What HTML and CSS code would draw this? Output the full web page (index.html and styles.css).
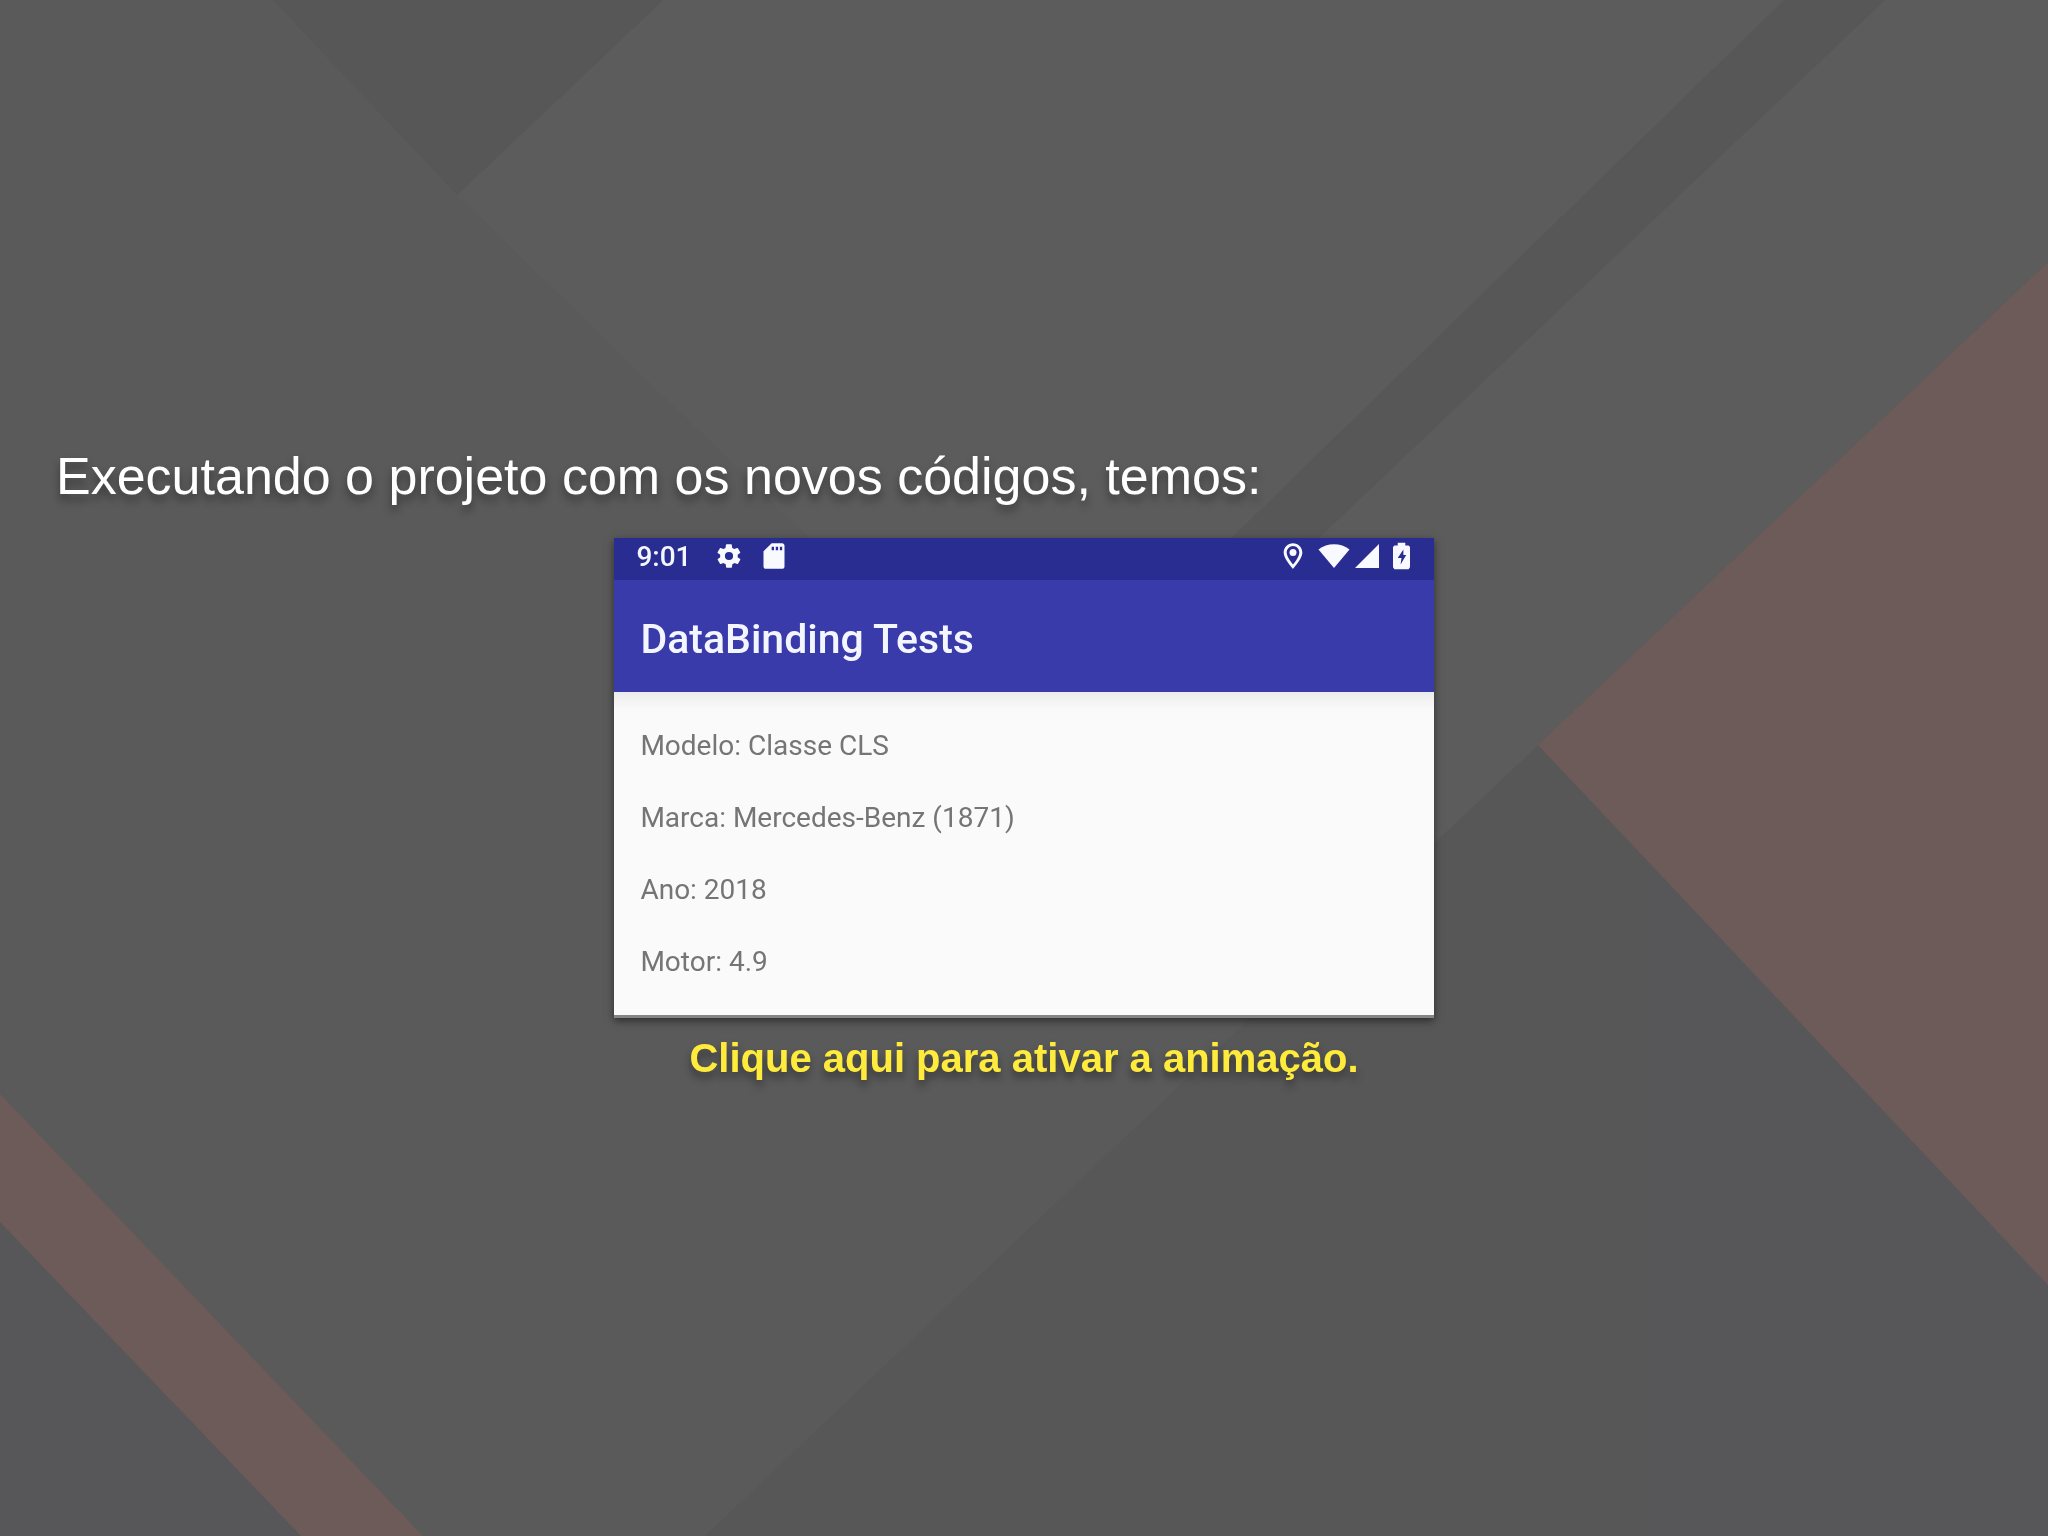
FILE: index.html
```html
<!DOCTYPE html>
<html lang="pt-BR">
<head>
    <meta charset="UTF-8">
    <meta name="viewport" content="width=device-width, initial-scale=1.0">
    <title>DataBinding Tests</title>
    <link rel="stylesheet" href="styles.css">
</head>
<body>
    <svg class="bg" viewBox="0 0 2048 1536" preserveAspectRatio="none" aria-hidden="true">
        <defs>
            <linearGradient id="shade">
                <stop offset="0" stop-color="#575757"/>
                <stop offset=".5" stop-color="#575757"/>
                <stop offset=".8" stop-color="#575759"/>
            </linearGradient>
        </defs>
        <polygon fill="#5c5c5c" points="457,195 663,0 2048,0 2048,262 1538,747 1340,930 1180,900"/>
        <polygon fill="#575757" points="273,0 663,0 457,195"/>
        <polygon fill="#575757" points="1784,0 1885,0 1178,672 1094,672"/>
        <polygon fill="url(#shade)" points="1538,745 705,1536 2048,1536 2048,1285"/>
        <polygon fill="#6c5b58" points="2048,262 1538,745 2048,1285"/>
        <polygon fill="#575759" points="0,1222 301,1536 0,1536"/>
        <polygon fill="#6c5b58" points="0,1094 423,1536 301,1536 0,1222"/>
    </svg>
    <main class="slide">
        <h1 class="title">Executando o projeto com os novos códigos, temos:</h1>
        <div class="phone">
            <div class="status">
                <span class="time">9:01</span>
                <svg class="icon gear" viewBox="0 0 24 24"><path d="M19.4 13c0-.3.1-.6.1-1s0-.7-.1-1l2.1-1.600c.2-.2.2-.4.1-.6l-2-3.500c-.1-.2-.4-.3-.6-.2l-2.500 1c-.5-.4-1.100-.7-1.700-1l-.4-2.600c0-.3-.2-.5-.5-.5h-4c-.2 0-.4.2-.5.4l-.4 2.700c-.6.200-1.100.6-1.700 1l-2.500-1c-.2-.1-.5 0-.6.2l-2 3.400c-.1.200-.1.500.1.700L4.500 11c0 .3-.1.600-.1 1s0 .7.100 1l-2.100 1.600c-.2.200-.2.400-.1.600l2 3.500c.1.200.4.300.6.200l2.500-1c.5.400 1.100.7 1.700 1l.4 2.600c0 .3.200.5.500.5h4c.3 0 .5-.2.500-.4l.4-2.700c.6-.2 1.100-.6 1.700-1l2.500 1c.2.100.5 0 .6-.2l2-3.400c.1-.2.100-.5-.1-.7zM12 15.500a3.500 3.500 0 1 1 0-7 3.500 3.500 0 0 1 0 7z" fill-rule="evenodd"/></svg>
                <svg class="icon" viewBox="0 0 24 24"><path fill-rule="evenodd" d="M19 1h-9L3 8v13c0 1.100.9 2 2 2h14c1.100 0 2-.9 2-2V3c0-1.100-.9-2-2-2zm-7 6h-2V4h2zm3.500 0h-2V4h2zm3.500 0h-2V4h2z"/></svg>
                <span class="space"></span>
                <svg class="icon pin" viewBox="0 0 24 24"><path fill-rule="evenodd" d="M12 1C7.600 1 4 4.500 4 9c0 5.500 8 14 8 14s8-8.500 8-14c0-4.500-3.600-8-8-8zm0 2.400c3 0 5.400 2.500 5.400 5.500 0 3-2.900 7.300-5.400 10.400C9.500 16.200 6.600 12 6.600 9c0-3 2.400-5.600 5.400-5.600z"/><circle cx="12" cy="9" r="3"/></svg>
                <svg class="icon wifi" viewBox="0 0 32 26"><path d="M.5 6.500C9-.5 23-.5 31.500 6.500L16 25z"/></svg>
                <svg class="icon signal" viewBox="0 0 26 26"><path d="M25 1v24H1z"/></svg>
                <svg class="icon battery" viewBox="0 0 18 28"><path fill-rule="evenodd" d="M5 0h8v3h3.500L18 4.500V26l-1.500 2h-15L0 26V4.500L1.500 3H5zM11 7l-6 9h4l-1 7 6-10h-3z"/></svg>
            </div>
            <div class="toolbar">DataBinding Tests</div>
            <ul class="info">
                <li>Modelo: Classe CLS</li>
                <li>Marca: Mercedes-Benz (1871)</li>
                <li>Ano: 2018</li>
                <li>Motor: 4.9</li>
            </ul>
        </div>
        <a class="play" href="#">Clique aqui para ativar a animação.</a>
    </main>
</body>
</html>
```
FILE: styles.css
```css
*{
    box-sizing: border-box;
}
body{
    margin:0;
    background: #5a5a5a;
    font-family: "Liberation Sans", Arial, sans-serif;
}
.bg{
    position: fixed;
    top:0;
    left:0;
    width:100%;
    height:100%;
    z-index: -1;
}
.slide{
    display: flex;
    flex-direction: column;
    align-items: center;
    justify-content: center;
    min-height: 100vh;
    padding:0 56px 9px;
}
.title{
    align-self: flex-start;
    margin:0 0 32px;
    color: #fff;
    font-size: 52px;
    font-weight: normal;
    line-height: 60px;
    text-shadow: 0 6px 8px rgba(0, 0, 0, .4);
}
.phone{
    width:40vw;
    min-width: 480px;
    font-family: Roboto, sans-serif;
    background: #fafafa;
    border-bottom: 3px solid #858585;
    box-shadow: 0 3px 8px rgba(0, 0, 0, .5);
}
.status{
    display: flex;
    align-items: center;
    height:42px;
    padding:0 24px 6px 22px;
    background: #292c90;
    color: #f4f6ff;
}
.time{
    margin-right: 23px;
    font-size: 28px;
    font-weight: 500;
}
.icon{
    width:28px;
    height:28px;
    fill: #f8faff;
}
.gear{
    margin-right: 17px;
}
.space{
    flex:1;
}
.pin{
    margin-right: 11px;
}
.wifi{
    width:32px;
    height:26px;
    margin-right: 4px;
}
.signal{
    width:26px;
    height:26px;
    margin-right: 13px;
}
.battery{
    width:17px;
}
.toolbar{
    height:112px;
    padding:0 26px;
    background: #3a3bab;
    color: #f4f6ff;
    font-size: 41px;
    font-weight: 500;
    line-height: 118px;
}
.info{
    margin:0;
    padding:35px 26px 34px;
    list-style: none;
    background: linear-gradient(#ececec, #fafafa 18px);
    color: #757575;
    font-size: 28px;
    line-height: 38px;
}
.info li + li{
    margin-top: 34px;
}
.play{
    margin-top: 17px;
    color: #ffeb3b;
    font-size: 40px;
    font-weight: bold;
    line-height: 46px;
    text-decoration: none;
    text-shadow: 0 6px 8px rgba(0, 0, 0, .4);
}
```
